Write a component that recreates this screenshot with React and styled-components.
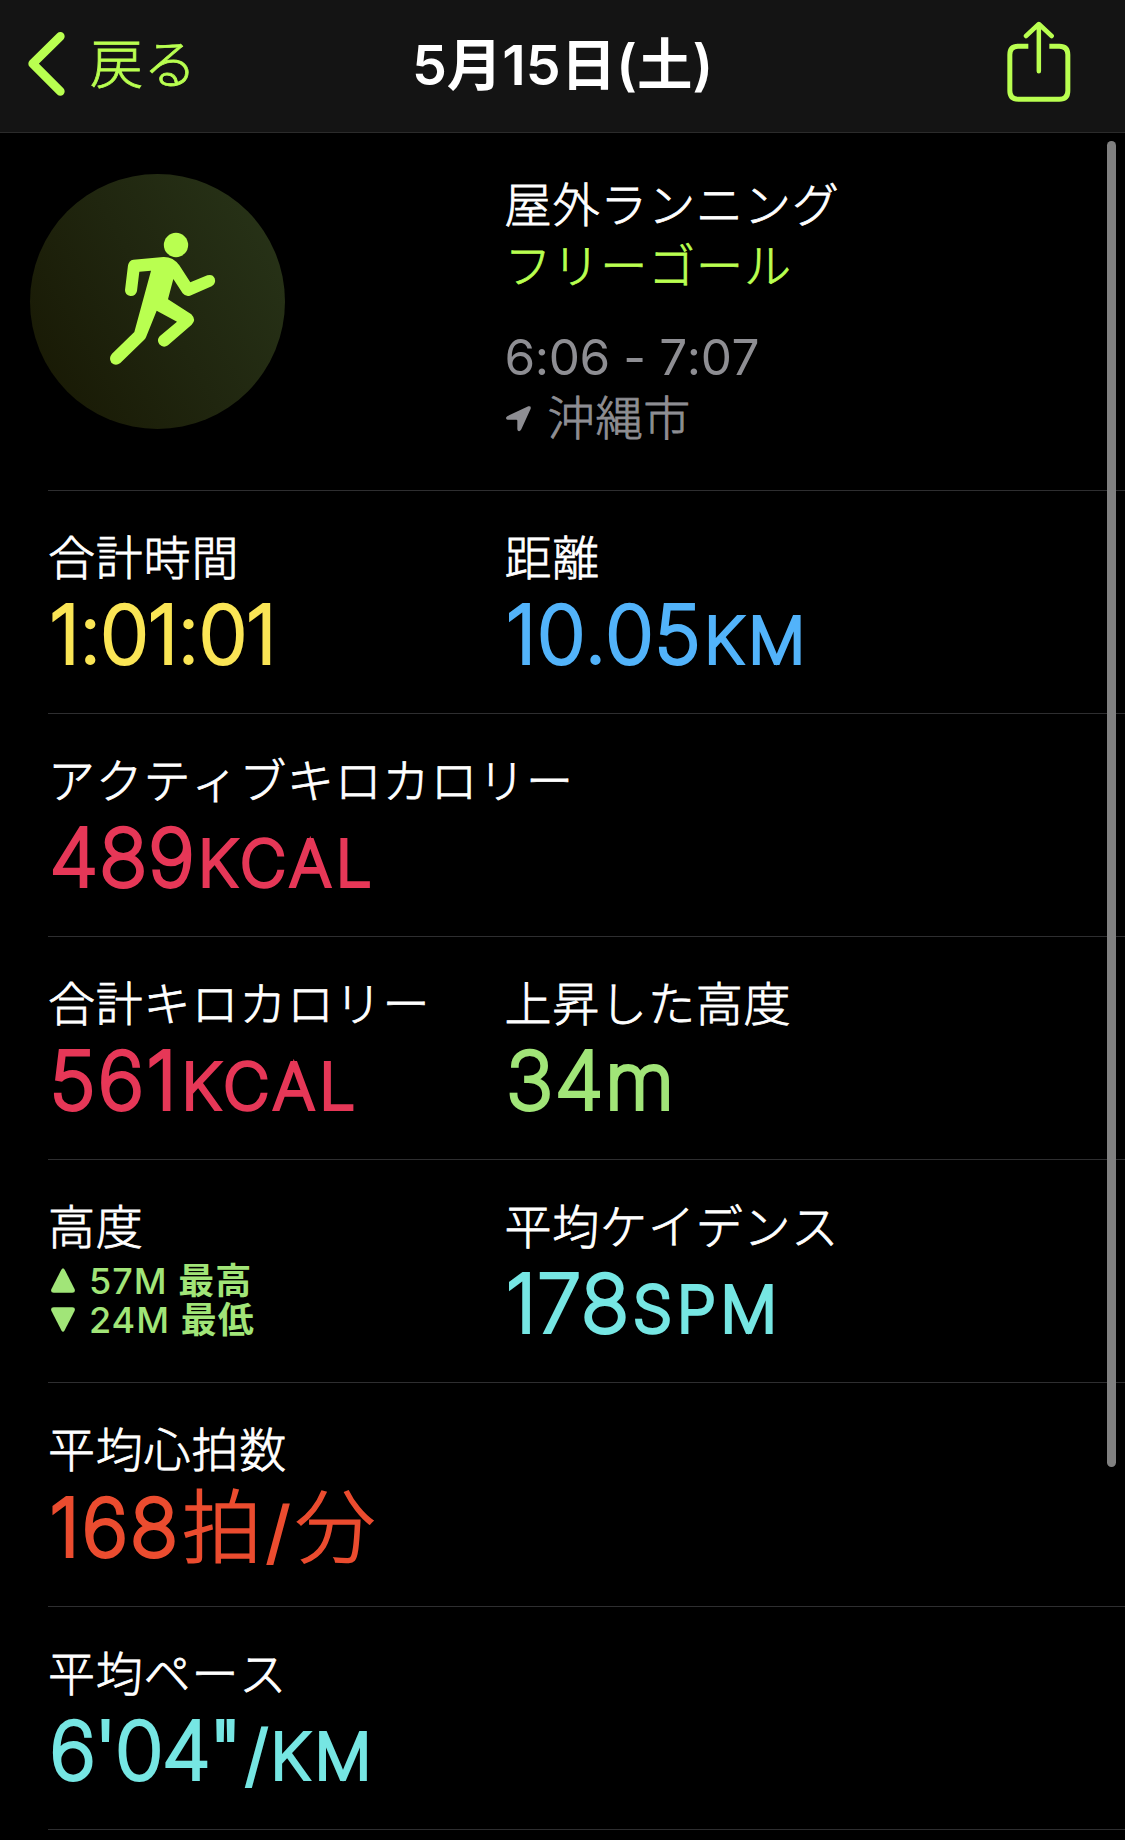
import React from "react";
import styled, { createGlobalStyle } from "styled-components";

const LIME = "#b9ff50";

const stats = [
  [
    { label: "合計時間", number: "1:01:01", color: "#fae555", spacing: -0.6 },
    { label: "距離", number: "10.05", unit: "KM", color: "#52b3fa", spacing: 1.1 },
  ],
  [{ label: "アクティブキロカロリー", number: "489", unit: "KCAL", color: "#e63757", spacing: 1 }],
  [
    { label: "合計キロカロリー", number: "561", unit: "KCAL", color: "#e63757", spacing: 2.3 },
    { label: "上昇した高度", number: "34m", color: "#a1e578", spacing: 1.6 },
  ],
  [
    { label: "高度", elevation: { max: "57M", min: "24M" } },
    { label: "平均ケイデンス", number: "178", unit: "SPM", color: "#76e6e3", spacing: 1 },
  ],
  [{ label: "平均心拍数", number: "168", kanjiUnit: ["拍", "分"], color: "#eb4c2f", spacing: 2 }],
  [{ label: "平均ペース", number: "6'04\"", slash: true, unit: "KM", color: "#76e6e3", spacing: -1.5 }],
];

const BackIcon = () => (
  <svg width="38" height="64" viewBox="84 98 114 192" fill="none">
    <path
      d="M181 111 L98 193 L181 276"
      stroke={LIME}
      strokeWidth="26"
      strokeLinecap="round"
      strokeLinejoin="round"
    />
  </svg>
);

const ShareIcon = () => (
  <svg width="64" height="81" viewBox="170 64 192 243" fill="none" stroke={LIME} strokeWidth="15">
    <path d="M234 139.5 H204 Q178.500 139.500 178.500 165 V273 Q178.500 298.500 204 298.500 H327 Q352.500 298.500 352.500 273 V165 Q352.500 139.500 327 139.500 H297" />
    <path d="M265.500 75 V215 M227 109 L265.500 73 L304 109" strokeWidth="13.500" strokeLinecap="round" strokeLinejoin="round" />
  </svg>
);

const RunnerIcon = () => (
  <svg width="255" height="255" viewBox="30 42 765 765" fill={LIME}>
    <circle cx="468" cy="255" r="36.500" />
    <path d="M340 299 L430 291 Q459 290 478 316 L511 367 L562 346 Q578 341 584 355 Q589 370 575 379 L510 407 Q497 411 488 400 L460 357 L444 418 L514 463 Q530 480 515 494 L444 556 Q430 566 418 553 Q409 540 419 529 L471 485 L410 452 L378 532 Q376 537 372 540 L301 609 Q287 620 274 608 Q265 594 276 581 L343 516 L393 332 L358 335 L351 393 Q347 409 331 408 Q315 405 315 390 L324 316 Q327 301 340 299 Z" />
  </svg>
);

const LocationIcon = () => (
  <svg width="25" height="26" viewBox="0 0 75 78" fill="#8e8e93">
    <path d="M67 1 Q76 -1 74 8 L46 70 Q43 77 37 75 Q34 73 34 69 V44 Q34 41 31 41 H5 Q0 41 0 36 Q0 33 5 30 Z" />
  </svg>
);

const TriangleIcon = ({ down }) => (
  <Triangle width="24" height="25" viewBox="0 0 72 75" $down={down}>
    <path d="M31 5 Q36 -4 41 5 L71 64 Q74 74 64 74 H8 Q-2 74 1 64 Z" />
  </Triangle>
);

const Value = ({ stat }) => (
  <ValueLine $color={stat.color}>
    <Digits $spacing={stat.spacing}>{stat.number}</Digits>
    {stat.slash && <Slash>/</Slash>}
    {stat.unit && <Unit $tight={stat.slash}>{stat.unit}</Unit>}
    {stat.kanjiUnit && (
      <>
        <KanjiUnit>{stat.kanjiUnit[0]}</KanjiUnit>
        <Slash>/</Slash>
        <KanjiUnit>{stat.kanjiUnit[1]}</KanjiUnit>
      </>
    )}
  </ValueLine>
);

const Elevation = ({ max, min }) => (
  <ElevationList>
    <ElevationLine>
      <TriangleIcon />
      <ElevationText>
        {max} <Bold>最高</Bold>
      </ElevationText>
    </ElevationLine>
    <ElevationLine>
      <TriangleIcon down />
      <ElevationText>
        {min} <Bold>最低</Bold>
      </ElevationText>
    </ElevationLine>
  </ElevationList>
);

const App = () => {
  return (
    <Screen>
      <GlobalStyle />
      <Header>
        <BackButton>
          <BackIcon />
          <BackLabel>戻る</BackLabel>
        </BackButton>
        <Title>5月15日(土)</Title>
        <ShareButton>
          <ShareIcon />
        </ShareButton>
      </Header>

      <Summary>
        <Badge>
          <RunnerIcon />
        </Badge>
        <Info>
          <InfoLine>屋外ランニング</InfoLine>
          <InfoLine $color={LIME}>フリーゴール</InfoLine>
          <Time>6:06 - 7:07</Time>
          <Location $color="#8e8e93">
            <LocationIcon />
            <Place>沖縄市</Place>
          </Location>
        </Info>
      </Summary>

      {stats.map((row) => (
        <Row key={row[0].label}>
          {row.map((stat) => (
            <Cell key={stat.label}>
              <Label>{stat.label}</Label>
              {stat.elevation ? <Elevation {...stat.elevation} /> : <Value stat={stat} />}
            </Cell>
          ))}
        </Row>
      ))}
      <Row />
      <Scrollbar />
    </Screen>
  );
};

const GlobalStyle = createGlobalStyle`
  * {
    box-sizing: border-box;
  }
  body {
    margin: 0;
    background: #000;
    overflow: hidden;
  }
  svg {
    display: block;
    flex: none;
  }
`;

const Screen = styled.main`
  position: relative;
  width: 1125px;
  height: 1840px;
  overflow: hidden;
  background: #000;
  color: #fff;
  font-family: Inter, "Noto Sans CJK JP", sans-serif;
`;
const Header = styled.header`
  display: grid;
  grid-template-columns: 1fr auto 1fr;
  align-items: center;
  height: 133px;
  padding: 0 28px 4px;
  background: #141414;
  border-bottom: 1px solid #2b2b2b;
`;
const BackButton = styled.div`
  display: flex;
  align-items: center;
  gap: 24px;
  color: ${LIME};
`;
const BackLabel = styled.span`
  padding-top: 1px;
  font-size: 53px;
  font-weight: 300;
  letter-spacing: 0.5px;
  line-height: 64px;
  -webkit-text-stroke: 0.8px ${LIME};
`;
const Title = styled.h1`
  margin: 0;
  padding-top: 1px;
  font-size: 55.5px;
  font-weight: 600;
  line-height: 80px;
`;
const ShareButton = styled.div`
  justify-self: end;
  margin-right: 26px;
  padding-bottom: 5px;
`;
const Summary = styled.section`
  display: grid;
  grid-template-columns: 474.5px 1fr;
  height: 357px;
  padding: 41px 0 0 30px;
`;
const Badge = styled.div`
  width: 255px;
  height: 255px;
  border-radius: 50%;
  background: linear-gradient(60deg, #191a05 10%, #20260f 50%, #273217 90%);
`;
const Info = styled.div`
  display: flex;
  flex-direction: column;
`;
const InfoLine = styled.div`
  display: flex;
  align-items: center;
  height: 61px;
  color: ${(props) => props.$color || "#fff"};
  font-size: 47px;
  font-weight: 300;
  font-kerning: none;
  letter-spacing: 0.9px;
  line-height: 61px;
  -webkit-text-stroke: 0.8px currentColor;
`;
const Time = styled(InfoLine)`
  margin-top: 30px;
  padding-top: 1px;
  color: #8e8e93;
  font-size: 49.5px;
  font-weight: 400;
  letter-spacing: -0.4px;
  -webkit-text-stroke: 0;
`;
const Location = styled(InfoLine)`
  padding: 3px 0 0 1px;
`;
const Place = styled.span`
  margin: -3px 0 0 17px;
`;
const Row = styled.section`
  display: grid;
  grid-template-columns: 456.5px 1fr;
  height: 223.12px;
  margin-left: 48px;
  border-top: 1px solid #2e2e30;
`;
const Cell = styled.div`
  padding-top: 36px;
  white-space: nowrap;
`;
const Label = styled.div`
  height: 61px;
  font-size: 47px;
  font-weight: 300;
  font-kerning: none;
  letter-spacing: 0.8px;
  line-height: 61px;
  -webkit-text-stroke: 0.8px currentColor;
`;
const ValueLine = styled.div`
  display: flex;
  align-items: baseline;
  height: 92px;
  margin-left: 1.5px;
  color: ${(props) => props.$color};
  font-weight: 200;
  line-height: 93px;
  stroke-linejoin: round;
  -webkit-text-stroke: 4px ${(props) => props.$color};
`;
const Digits = styled.span`
  font-size: 79.5px;
  letter-spacing: ${(props) => props.$spacing}px;
`;
const Unit = styled.span`
  margin-left: ${(props) => (props.$tight ? -1 : 2.5)}px;
  font-size: 63.5px;
  letter-spacing: 4.5px;
`;
const Slash = styled.span`
  margin: 0 4px 0 5px;
  font-size: 66px;
`;
const KanjiUnit = styled.span`
  margin-left: 2px;
  font-size: 80px;
  font-weight: 300;
  -webkit-text-stroke: 1.6px currentColor;
`;
const ElevationList = styled.div`
  padding: 4px 0 0 3px;
  color: #a1e578;
`;
const ElevationLine = styled.div`
  display: flex;
  align-items: center;
  gap: 14px;
  height: 39px;
  font-size: 36px;
  font-weight: 450;
  letter-spacing: 1px;
  line-height: 39px;
`;
const ElevationText = styled.span`
  padding-top: 2px;
`;
const Bold = styled.b`
  font-weight: 600;
`;
const Triangle = styled.svg`
  fill: #a1e578;
  transform: ${(props) => (props.$down ? "rotate(180deg)" : "none")};
`;
const Scrollbar = styled.div`
  position: absolute;
  top: 141px;
  right: 9px;
  width: 9px;
  height: 1326px;
  border-radius: 5px;
  background: #808080;
`;

export default App;
